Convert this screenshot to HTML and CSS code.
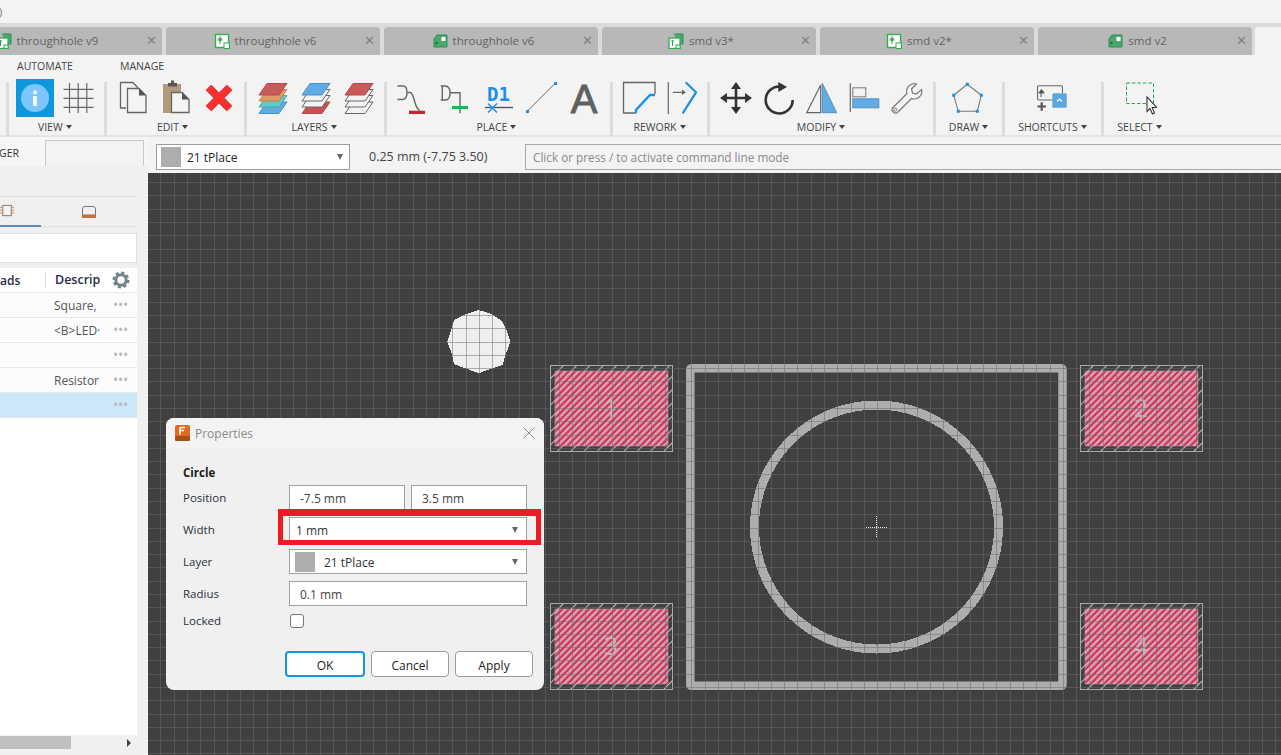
FILE: index.html
```html
<!DOCTYPE HTML>
<html lang="en-US">
<head>
	<meta charset="UTF-8">
	<title>Properties - Circle</title>
	<link rel="stylesheet" href="styles.css">
</head>
<body>
	<div id="titlebar">)</div>

	<div id="tabs">
		<div class="tab first">
			<svg class="tab-icon" viewBox="0 0 16 16"><use href="#ic-combo"/></svg>
			<span>throughhole v9</span><b class="tab-close">&#10005;</b>
		</div>
		<div class="tab">
			<svg class="tab-icon" viewBox="0 0 16 16"><use href="#ic-sch"/></svg>
			<span>throughhole v6</span><b class="tab-close">&#10005;</b>
		</div>
		<div class="tab">
			<svg class="tab-icon" viewBox="0 0 16 16"><use href="#ic-board"/></svg>
			<span>throughhole v6</span><b class="tab-close">&#10005;</b>
		</div>
		<div class="tab">
			<svg class="tab-icon" viewBox="0 0 16 16"><use href="#ic-combo"/></svg>
			<span>smd v3*</span><b class="tab-close">&#10005;</b>
		</div>
		<div class="tab">
			<svg class="tab-icon" viewBox="0 0 16 16"><use href="#ic-sch"/></svg>
			<span>smd v2*</span><b class="tab-close">&#10005;</b>
		</div>
		<div class="tab">
			<svg class="tab-icon" viewBox="0 0 16 16"><use href="#ic-board"/></svg>
			<span>smd v2</span><b class="tab-close">&#10005;</b>
		</div>
		<div class="tab active"></div>
	</div>

	<div id="ribbon">
		<div class="ribbon-nav">
			<span class="nav-automate">AUTOMATE</span>
			<span class="nav-manage">MANAGE</span>
		</div>
		<div class="ribbon-groups">
			<div class="group g-view">
				<div class="icons">
					<svg viewBox="0 0 36 38"><rect x="-1" width="38" height="38" fill="#0f97dc"/><circle cx="18" cy="19" r="14" fill="#7cc6ff"/><rect x="16.2" y="17" width="3.6" height="10" fill="#fff"/><rect x="16.2" y="11.5" width="3.6" height="3.6" fill="#fff"/></svg>
					<svg viewBox="0 0 36 38"><path d="M9.5 4V34M18.2 4V34M26.8 4V34M3.5 10.3H33.5M3.5 19.3H33.5M3.5 28.3H33.5" fill="none" stroke="#666" stroke-width="1.2"/></svg>
				</div>
				<div class="label">VIEW</div>
			</div>
			<div class="group g-edit">
				<div class="icons">
					<svg viewBox="0 0 36 38"><path d="M12 29H6.5V3.5H19L24 9" fill="none" stroke="#666" stroke-width="1.3"/><path d="M13.5 9.5H25L32 16.5V33.5H13.5Z" fill="#f4f4f4" stroke="#666" stroke-width="1.3"/><path d="M25 9.5V16.5H32Z" fill="#555"/></svg>
					<svg viewBox="0 0 36 38"><rect x="6" y="5" width="18" height="29" fill="#b09a78"/><rect x="11" y="4" width="9" height="3.5" fill="#555"/><rect x="14" y="1.5" width="3" height="3" fill="#555"/><path d="M14.5 13.5H25L32 20.5V33.5H14.5Z" fill="#f4f4f4" stroke="#666" stroke-width="1.3"/><path d="M25 13.5V20.5H32Z" fill="#555"/></svg>
					<svg viewBox="0 0 36 38"><path d="M8.5 8.5L29.5 29.5M29.5 8.5L8.5 29.5" fill="none" stroke="#d8343a" stroke-width="8"/><path d="M8.5 8.5L29.5 29.5M29.5 8.5L8.5 29.5" fill="none" stroke="#fa2f2f" stroke-width="6"/></svg>
				</div>
				<div class="label">EDIT</div>
			</div>
			<div class="group g-layers">
				<div class="icons">
					<svg viewBox="0 0 36 38"><polygon points="5,34.5 13,23 33,23 25,34.5" fill="#62ace3" stroke="#4c8fc4"/><polygon points="5,28 13,16.5 33,16.5 25,28" fill="#5ccbc9" stroke="#45aaa8"/><polygon points="5,22 13,10.5 33,10.5 25,22" fill="#e09a62" stroke="#c48350"/><polygon points="5,16 13,4.5 33,4.5 25,16" fill="#c85a5a" stroke="#b34a4a"/></svg>
					<svg viewBox="0 0 36 38"><polygon points="5,34.5 13,23 33,23 25,34.5" fill="#c85050" stroke="#b34a4a"/><polygon points="5,28 13,16.5 33,16.5 25,28" fill="#f4f4f4" stroke="#666"/><polygon points="5,22 13,10.5 33,10.5 25,22" fill="#f4f4f4" stroke="#666"/><polygon points="5,16 13,4.5 33,4.5 25,16" fill="#62ace3" stroke="#4c8fc4"/></svg>
					<svg viewBox="0 0 36 38"><polygon points="5,34.5 13,23 33,23 25,34.5" fill="#f4f4f4" stroke="#666"/><polygon points="5,28 13,16.5 33,16.5 25,28" fill="#f4f4f4" stroke="#666"/><polygon points="5,22 13,10.5 33,10.5 25,22" fill="#f4f4f4" stroke="#666"/><polygon points="5,16 13,4.5 33,4.5 25,16" fill="#c85a5a" stroke="#b34a4a"/></svg>
				</div>
				<div class="label">LAYERS</div>
			</div>
			<div class="group g-place">
				<div class="icons">
					<svg viewBox="0 0 36 38"><path d="M3.5 7H9Q13 7 13 13.5T9 20.5H3.5M13 13.5H16C21 14 19.5 29 26 31.7" fill="none" stroke="#666" stroke-width="1.4"/><rect x="15" y="31.7" width="16" height="3.3" fill="#c4282c"/></svg>
					<svg viewBox="0 0 36 38"><path d="M3.7 7H6.5M3.7 21H6.5M5.3 7V21M6.5 7H8Q13 7 13 14T8 21H6.5M13 13.7H23V27M23 30V34.3" fill="none" stroke="#666" stroke-width="1.4"/><rect x="15" y="27" width="16" height="3" fill="#1fb356"/></svg>
					<svg viewBox="0 0 36 38"><text class="icon-d1" x="7" y="22">D1</text><path d="M5 28.5H33" stroke="#555" stroke-width="1.4"/><path d="M8 24.5L17 33.5M17 24.5L8 33.5" stroke="#1a90e8" stroke-width="1.5"/></svg>
					<svg viewBox="0 0 36 38"><path d="M4.5 32L32 4.5" stroke="#666" stroke-width="1"/><rect x="3" y="31" width="3" height="3" fill="#1a90e8"/><rect x="31" y="3" width="3" height="3" fill="#1a90e8"/></svg>
					<svg viewBox="0 0 36 38"><text class="icon-a" x="18" y="34">A</text></svg>
				</div>
				<div class="label">PLACE</div>
			</div>
			<div class="group g-rework">
				<div class="icons">
					<svg viewBox="0 0 36 38"><path d="M35 15V3.5H3.5V34H16" fill="none" stroke="#666" stroke-width="1.3"/><path d="M16 34V31L30 16H35" fill="none" stroke="#1a90e8" stroke-width="2.4"/></svg>
					<svg viewBox="0 0 36 38"><path d="M5.3 3V35M10 13.3H20" fill="none" stroke="#666" stroke-width="1.2"/><path d="M19 10.5L23 13.3L19 16Z" fill="#666"/><path d="M22.7 3.3L33 13.3L19.7 34.3" fill="none" stroke="#1a90e8" stroke-width="2.2"/></svg>
				</div>
				<div class="label">REWORK</div>
			</div>
			<div class="group g-modify">
				<div class="icons">
					<svg viewBox="0 0 36 38"><path d="M19 8V30M8 19H30" stroke="#333" stroke-width="2.6"/><path d="M19 3L24 10H14ZM19 35L14 28H24ZM3 19L10 14V24ZM35 19L28 24V14Z" fill="#333"/></svg>
					<svg viewBox="0 0 36 38"><path d="M20 7.5A13.5 13.5 0 1 0 32.7 21" fill="none" stroke="#333" stroke-width="2.6"/><path d="M18.3 3L27 8L18.3 13Z" fill="#333"/></svg>
					<svg viewBox="0 0 36 38"><path d="M3.7 33.7L17.7 6V33.7Z" fill="none" stroke="#666" stroke-width="1.2"/><path d="M19.3 4.3L33.7 33.7H19.3Z" fill="#63ace3" stroke="#4f92c6"/></svg>
					<svg viewBox="0 0 36 38"><path d="M4.3 4.3V33" stroke="#666" stroke-width="1.2"/><rect x="6.8" y="8.8" width="13" height="9" fill="none" stroke="#777"/><rect x="6.8" y="19.8" width="26" height="9" fill="#63ace3" stroke="#4f92c6"/></svg>
					<svg viewBox="0 0 36 38"><path d="M3.5 29L18 14.5C16.5 9 21 3.5 27.5 5L22.5 10L23.5 14L27.5 15L32.5 10.5C34 16.5 28.5 21.5 22.5 19.5L8.5 33.5C6 35.5 1.5 31.5 3.5 29Z" fill="#f6f6f6" stroke="#777" stroke-width="1.2"/><circle cx="6.3" cy="30.6" r="1.5" fill="none" stroke="#777"/></svg>
				</div>
				<div class="label">MODIFY</div>
			</div>
			<div class="group g-draw">
				<div class="icons">
					<svg viewBox="0 0 36 38"><polygon points="16.3,5.3 30.3,16.3 26.3,32.3 7.3,32.3 2.7,16.3" fill="none" stroke="#777" stroke-width="1.1"/><path d="M14.8 3.8h3v3h-3zM28.8 14.8h3v3h-3zM24.8 30.8h3v3h-3zM5.8 30.8h3v3h-3zM1.2 14.8h3v3h-3z" fill="#1a90e8"/></svg>
				</div>
				<div class="label">DRAW</div>
			</div>
			<div class="group g-shortcuts">
				<div class="icons">
					<svg viewBox="0 0 36 38"><path d="M17 21H4A1.5 1.5 0 0 1 2.5 19.5V8.2A1.5 1.5 0 0 1 4 6.7H26A1.5 1.5 0 0 1 27.5 8.2V14" fill="none" stroke="#666" stroke-width="1.1"/><path d="M6 18V13.5M3.8 14L6.5 10.5L9.2 14Z" fill="#555" stroke="#555"/><path d="M2.5 27.5H11M6.7 23.2V31.7" stroke="#555" stroke-width="2.2"/><rect x="17.3" y="14.3" width="14.5" height="14.5" rx="1.5" fill="#5ba7df"/><path d="M22 22.5L24.5 20L27 22.5" fill="none" stroke="#fff" stroke-width="1.1"/></svg>
				</div>
				<div class="label">SHORTCUTS</div>
			</div>
			<div class="group g-select">
				<div class="icons">
					<svg viewBox="0 0 36 38"><rect x="3.5" y="4" width="27" height="20.5" fill="none" stroke="#1fa855" stroke-width="1" stroke-dasharray="3.5 2"/><path d="M24 18V32.5L27 29.5L29.5 35L31.5 34L29.2 28.6L33.5 28.3Z" fill="#fff" stroke="#333" stroke-width="1.1"/></svg>
				</div>
				<div class="label">SELECT</div>
			</div>
		</div>
	</div>

	<div id="lower">
		<aside id="sidebar">
			<div class="side-head">
				<span class="side-ger">GER</span>
				<span class="side-box"></span>
			</div>
			<div class="side-body">
				<div class="side-tabs">
					<div class="side-tab on">
						<svg width="16" height="14" viewBox="0 0 16 14"><rect x="3" y="1" width="9" height="11" fill="#f3f3f3" stroke="#777"/><path d="M0 3H3M0 6H3M0 9H3M12 3H15M12 6H15M12 9H15" stroke="#d9823a"/></svg>
					</div>
					<div class="side-tab">
						<svg width="16" height="14" viewBox="0 0 16 14"><path d="M1.5 10V4Q1.5 1.5 4 1.5H12Q14.5 1.5 14.5 4V10Z" fill="#f0f0f0" stroke="#777"/><rect x="1" y="10" width="14" height="3" fill="#c9703a"/></svg>
					</div>
				</div>
				<div class="side-search"></div>
				<div class="parts">
					<div class="parts-head">
						<span class="col-a">ads</span>
						<span class="col-b">Descrip</span>
						<svg class="gear" width="18" height="18" viewBox="0 0 18 18"><circle cx="9" cy="9" r="5.2" fill="none" stroke="#73848f" stroke-width="3"/><circle cx="9" cy="9" r="7.2" fill="none" stroke="#73848f" stroke-width="2.6" stroke-dasharray="3.05 2.6"/></svg>
					</div>
					<div class="part"><span class="col-a"></span><span class="col-b">Square,</span><span class="dots">&#8226;&#8226;&#8226;</span></div>
					<div class="part"><span class="col-a"></span><span class="col-b">&lt;B&gt;LED&middot;</span><span class="dots">&#8226;&#8226;&#8226;</span></div>
					<div class="part"><span class="col-a"></span><span class="col-b"></span><span class="dots">&#8226;&#8226;&#8226;</span></div>
					<div class="part"><span class="col-a"></span><span class="col-b">Resistor</span><span class="dots">&#8226;&#8226;&#8226;</span></div>
					<div class="part picked"><span class="col-a"></span><span class="col-b"></span><span class="dots">&#8226;&#8226;&#8226;</span></div>
					<div class="parts-rest"></div>
					<div class="hscroll">
						<span class="hscroll-thumb"></span>
						<span class="hscroll-arrow"></span>
					</div>
				</div>
			</div>
		</aside>

		<main id="work">
			<div class="options">
				<div class="layer-select">
					<span class="swatch"></span>
					<span class="layer-name">21 tPlace</span>
					<span class="caret"></span>
				</div>
				<span class="coords">0.25 mm (-7.75 3.50)</span>
				<div class="command">Click or press / to activate command line mode</div>
			</div>
			<div class="canvas">
				<svg class="board" viewBox="148 173 1133 582" width="1133" height="582">
					<defs>
						<pattern id="pad-fill" width="4.7" height="4.7" patternUnits="userSpaceOnUse" patternTransform="rotate(45 0 0)">
							<rect width="4.7" height="4.7" fill="#d42f58"/>
							<rect width="2.5" height="4.7" fill="#d2a8b4"/>
						</pattern>
						<pattern id="pad-hatch" width="9.4" height="9.4" patternUnits="userSpaceOnUse" patternTransform="rotate(45 0 0)">
							<rect width="1" height="9.4" fill="#c4c4c4"/>
						</pattern>
						<g id="pad">
							<rect x="0.5" y="0.5" width="122" height="86" fill="url(#pad-hatch)" stroke="#aaa"/>
							<rect x="5" y="6" width="113" height="75" fill="url(#pad-fill)" stroke="#c0a0aa" stroke-width="0.5"/>
						</g>
					</defs>
					<rect x="148" y="173" width="1133" height="582" fill="#404040"/>
					<polygon class="jagged" fill="#efefef" points="478.7,310 491.7,314 502.7,321.7 506.7,330.7 510.3,341.7 505,356.7 502.7,365 490,369 478.7,373.3 465.7,368.3 454,364.3 451.7,353.3 447.3,341.7 451.7,328.3 454,320 465.7,314.3"/>
					<use href="#pad" x="550" y="365"/>
					<use href="#pad" x="1080" y="365"/>
					<use href="#pad" x="550" y="603"/>
					<use href="#pad" x="1080" y="603"/>
					<rect x="690.3" y="368.3" width="372.2" height="317.5" rx="1" fill="none" stroke="#adadad" stroke-width="8.5"/>
					<circle class="jagged" cx="876.5" cy="527" r="122" fill="none" stroke="#adadad" stroke-width="9"/>
					<text class="pad-num" x="611" y="417">1</text>
					<text class="pad-num" x="1141" y="417">2</text>
					<text class="pad-num" x="611" y="655">3</text>
					<text class="pad-num" x="1141" y="655">4</text>
					<path d="M866 527H887M876.5 516V538" stroke="#e6e6e6" stroke-width="1" stroke-dasharray="1 1" shape-rendering="crispEdges"/>
					<!-- grid sits over the shapes, dashes keep the fractional pitch crisp -->
					<path d="M147.2 464H1281" stroke="#6a6a6a" stroke-opacity=".5" stroke-width="582" stroke-dasharray="1 12.27" shape-rendering="crispEdges"/>
					<path d="M714.5 168.9V755" stroke="#6a6a6a" stroke-opacity=".5" stroke-width="1133" stroke-dasharray="1 12.286" shape-rendering="crispEdges"/>
				</svg>
			</div>

			<div class="dialog">
				<div class="dialog-title">
					<svg width="15" height="16" viewBox="0 0 15 16"><rect width="15" height="16" rx="2" fill="#e8681e"/><rect y="11" width="15" height="5" rx="1.5" fill="#a8501c"/><path d="M5 2.5H10M5 2.5V9.5M5 5.5H9" stroke="#fff" stroke-width="1.6" fill="none"/></svg>
					<span>Properties</span>
					<svg class="dialog-close" width="12" height="12" viewBox="0 0 12 12"><path d="M.5.5L11.5 11.5M11.5.5L.5 11.5" stroke="#8f8f8f" stroke-width="1"/></svg>
				</div>
				<div class="dialog-body">
					<div class="section-name">Circle</div>
					<div class="field">
						<label>Position</label>
						<div class="pair">
							<div class="input">-7.5 mm</div>
							<div class="input">3.5 mm</div>
						</div>
					</div>
					<div class="field">
						<label>Width</label>
						<div class="input select tight">1 mm<span class="caret"></span></div>
					</div>
					<div class="field">
						<label>Layer</label>
						<div class="input select"><span class="swatch small"></span><span class="layer-value">21 tPlace</span><span class="caret"></span></div>
					</div>
					<div class="field">
						<label>Radius</label>
						<div class="input">0.1 mm</div>
					</div>
					<div class="field check-row">
						<label>Locked</label>
						<span class="checkbox"></span>
					</div>
				</div>
				<div class="dialog-buttons">
					<button class="btn primary">OK</button>
					<button class="btn">Cancel</button>
					<button class="btn">Apply</button>
				</div>
				<div class="callout"></div>
			</div>
		</main>
	</div>

	<svg class="sprites" width="0" height="0">
		<defs>
			<g id="ic-sch">
				<rect x="1.5" y="1.5" width="13" height="13" fill="#fff" stroke="#2db04a" stroke-width="1.4"/>
				<rect x="10" y="10" width="5.5" height="5.5" fill="#fff" stroke="#2db04a"/>
				<path d="M6 3V11M3.5 7H8.5M4.5 5.5H7.5L6 8Z" fill="none" stroke="#3a9a5a"/>
			</g>
			<g id="ic-board">
				<path d="M5 2H15V14H2V6Z" fill="#4aa86c" stroke="#2f8f52"/>
				<rect x="9.5" y="4" width="4" height="4" fill="#fff"/>
				<circle cx="4.5" cy="10" r="1.2" fill="#1f6f3e"/>
			</g>
			<g id="ic-combo">
				<path d="M6 1H15V11H11" fill="#4aa86c" stroke="#2f8f52"/>
				<rect x="1" y="5" width="11" height="10.5" fill="#fff" stroke="#2db04a" stroke-width="1.3"/>
				<rect x="8" y="12" width="4" height="3.5" fill="#fff" stroke="#2db04a"/>
				<path d="M4.5 7V13M3 8.5L4.5 7L6 8.5" fill="none" stroke="#3a9a5a"/>
			</g>
		</defs>
	</svg>
</body>
</html>
```

FILE: styles.css
```css
* {
	box-sizing: border-box;
}

html, body {
	margin: 0;
	padding: 0;
	height: 100%;
	overflow: hidden;
}

body {
	display: flex;
	flex-direction: column;
	background: #f3f3f3;
	font: 12px/1.25 "Open Sans", "Noto Sans", sans-serif;
	color: #333;
}

.sprites {
	position: absolute;
}

#titlebar {
	height: 23px;
	flex: none;
	padding-top: 3px;
	line-height: 18px;
	margin-left: -1px;
	color: #777;
	font-size: 11px;
}

/* document tabs */
#tabs {
	height: 32px;
	flex: none;
	display: flex;
	gap: 4px;
	padding-top: 4px;
	background: #dbdbdb;
	overflow: hidden;
}

.tab {
	flex: none;
	width: 214px;
	height: 28px;
	display: flex;
	align-items: center;
	justify-content: center;
	position: relative;
	padding-right: 16px;
	background: #b8b8b8;
	border-radius: 4px 4px 0 0;
	color: #636363;
	font-size: 11.5px;
}

.tab.first {
	margin-left: -52px;
}

.tab.active {
	background: #f4f4f4;
	margin-left: -1px;
}

.tab-icon {
	width: 16px;
	height: 16px;
	margin-right: 5px;
}

.tab-close {
	position: absolute;
	right: 5px;
	top: 6px;
	font: normal 13px/16px "DejaVu Sans", sans-serif;
	color: #808080;
}

/* ribbon */
#ribbon {
	height: 82px;
	flex: none;
	background: #f3f3f3;
	border-bottom: 2px solid #e4e4e4;
}

.ribbon-nav {
	height: 24px;
	position: relative;
	font-size: 10.5px;
	color: #444;
	line-height: 22px;
}

.nav-automate {
	position: absolute;
	left: 17px;
}

.nav-manage {
	position: absolute;
	left: 120px;
}

.ribbon-groups {
	display: flex;
	margin-left: 6px;
}

.group {
	height: 54px;
	border-left: 3px solid #dcdcdc;
	margin-top: 3px;
	position: relative;
}

.group .icons {
	display: flex;
	justify-content: center;
	gap: 7px;
	margin-top: -3px;
}

.group svg {
	flex: none;
	width: 36px;
	height: 38px;
	overflow: visible;
}

.label {
	text-align: center;
	font-size: 10.5px;
	line-height: 14px;
	margin-top: 3px;
	color: #444;
}

.label:after {
	content: "";
	display: inline-block;
	margin-left: 3px;
	vertical-align: 2px;
	border: 3.5px solid transparent;
	border-top: 4px solid #444;
	border-bottom: 0;
}

.g-view { width: 97.5px; }
.g-edit { width: 140px; }
.g-layers { width: 140px; }
.g-place { width: 226px; }
.g-rework { width: 97px; }
.g-modify { width: 226px; }
.g-draw { width: 69px; }
.g-shortcuts { width: 99px; }
.g-select { width: 78px; }

.g-view .label,
.g-place .label,
.g-select .label { padding-right: 3px; }
.g-edit .label { padding-right: 5px; }
.g-layers .label { padding-right: 2px; }

.icon-d1 {
	font: bold 19px "DejaVu Sans Mono", monospace;
	fill: #1a90e8;
}

.icon-a {
	font: 40px "Liberation Sans", sans-serif;
	fill: #606060;
	stroke: #606060;
	stroke-width: .9;
	text-anchor: middle;
}

/* lower part */
#lower {
	flex: 1;
	display: flex;
	min-height: 0;
}

#sidebar {
	width: 148px;
	flex: none;
	display: flex;
	flex-direction: column;
}

.side-head {
	height: 29px;
	flex: none;
	display: flex;
	padding-top: 3px;
	background: #f6f6f6;
}

.side-ger {
	width: 46px;
	font-size: 10.5px;
	line-height: 26px;
	margin-left: -1px;
}

.side-box {
	width: 99px;
	border: 1px solid #c8c8c8;
	border-bottom: 0;
	background: #f3f3f3;
}

.side-body {
	flex: 1;
	display: flex;
	flex-direction: column;
	background: #f0f0f0;
	padding: 30px 11px 5px 0;
}

.side-tabs {
	height: 31px;
	flex: none;
	display: flex;
	border-top: 1px solid #dfdfdf;
	border-bottom: 1px solid #dfdfdf;
}

.side-tab {
	width: 41px;
	display: flex;
	align-items: center;
	justify-content: flex-end;
	padding-right: 26px;
}

.side-tab.on {
	border-bottom: 2px solid #5b8ac0;
	margin-bottom: -1px;
}

.side-tab:not(.on) {
	width: 96px;
	padding-right: 40px;
}

.side-search {
	height: 30px;
	flex: none;
	margin-top: 6px;
	background: #fff;
	border: 1px solid #e2e2e2;
	border-left: 0;
}

.parts {
	flex: 1;
	display: flex;
	flex-direction: column;
	margin-top: 5px;
	min-height: 0;
}

.parts-head,
.part {
	display: flex;
	align-items: center;
	height: 25px;
	flex: none;
	border-bottom: 1px solid #e8e8e8;
	background: #fcfcfc;
}

.parts-head {
	background: #fff;
	font-weight: 600;
	color: #1f2d45;
}

.parts-head .col-b {
	border-left: 1px solid #e2e2e2;
	line-height: 16px;
	font-size: 12.5px;
}

.col-a {
	width: 45px;
	flex: none;
}

.col-b {
	width: 68px;
	flex: none;
	padding-left: 9px;
	overflow: hidden;
	white-space: nowrap;
	font-size: 12px;
}

.part .col-b {
	color: #555;
}

.dots {
	font-size: 14px;
	line-height: 14px;
	color: #b8b8b8;
	letter-spacing: -.3px;
}

.part.picked {
	background: #cce8f9;
}

.gear {
	margin-left: -1px;
}

.parts-rest {
	flex: 1;
	background: #fff;
}

.hscroll {
	height: 15px;
	flex: none;
	display: flex;
	align-items: center;
	justify-content: space-between;
	background: #f0f0f0;
	margin-right: -11px;
	padding-right: 17px;
}

.hscroll-thumb {
	width: 71px;
	height: 13px;
	background: #bfbfbf;
}

.hscroll-arrow {
	border: 4px solid transparent;
	border-left: 4px solid #444;
	border-right: 0;
}

/* work area */
#work {
	flex: 1;
	display: flex;
	flex-direction: column;
	position: relative;
	min-width: 0;
}

.options {
	height: 36px;
	flex: none;
	display: flex;
	align-items: flex-start;
	padding: 7px 0 0 8px;
	background: #f3f3f3;
}

.layer-select {
	width: 194px;
	height: 26px;
	display: flex;
	align-items: center;
	padding: 0 6px 0 4px;
	background: #fff;
	border: 1px solid #9c9c9c;
}

.swatch {
	width: 20px;
	height: 20px;
	flex: none;
	background: #adadad;
}

.layer-name {
	flex: 1;
	margin-left: 6px;
	color: #222;
}

.caret {
	border: 3.5px solid transparent;
	border-top: 6px solid #666;
	border-bottom: 0;
}

.coords {
	width: 156px;
	margin-left: 19px;
	line-height: 26px;
	font-size: 12.5px;
	color: #444;
}

.command {
	flex: 1;
	height: 26px;
	padding-left: 7px;
	line-height: 24px;
	font-size: 11.75px;
	color: #8a8a8a;
	background: #f3f3f3;
	border: 1px solid #a8a8a8;
	border-right: 0;
}

.canvas {
	flex: 1;
	min-height: 0;
	background: #404040;
}

.board {
	display: block;
}

.jagged {
	shape-rendering: crispEdges;
}

.pad-num {
	font: 25px "Open Sans", sans-serif;
	fill: #c4b4b8;
	text-anchor: middle;
}

/* properties dialog */
.dialog {
	position: absolute;
	left: 18px;
	top: 281px;
	width: 378px;
	height: 272px;
	background: #f0f0f0;
	border-radius: 8px;
}

.dialog-title {
	height: 30px;
	display: flex;
	align-items: center;
	padding: 0 9px;
	background: #f3f3f3;
	border-radius: 8px 8px 0 0;
	color: #8a8a8a;
}

.dialog-title span {
	margin-left: 5px;
}

.dialog-close {
	margin-left: auto;
}

.dialog-body {
	padding: 15px 17px 0;
	color: #2a2f3d;
}

.section-name {
	font-weight: 700;
	font-size: 11.5px;
	height: 22px;
	line-height: 20px;
	color: #1a1a1a;
}

.field {
	display: flex;
	align-items: center;
	height: 25px;
	margin-bottom: 7px;
}

.field label {
	width: 106px;
	flex: none;
	font-size: 11.5px;
	padding-top: 2px;
}

.pair {
	flex: 1;
	display: flex;
	gap: 6px;
}

.input {
	flex: 1;
	height: 25px;
	padding: 1px 0 0 10px;
	display: flex;
	align-items: center;
	background: #fff;
	border: 1px solid #a0a0a0;
	color: #444;
}

.input.select {
	padding: 1px 8px 0 5px;
}

.input.tight {
	padding-left: 6px;
	color: #333;
}

.input .caret {
	margin-left: auto;
}

.swatch.small {
	width: 20px;
	height: 20px;
	margin-top: -1px;
}

.layer-value {
	margin-left: 9px;
	color: #333;
}

.check-row {
	height: 15px;
	margin-bottom: 0;
	margin-top: 1px;
}

.checkbox {
	width: 14px;
	height: 14px;
	margin-left: 1px;
	background: #fff;
	border: 1px solid #777;
	border-radius: 3px;
}

.dialog-buttons {
	display: flex;
	gap: 6px;
	padding-left: 119px;
	margin-top: 23px;
}

.btn {
	width: 78px;
	height: 26px;
	padding: 2px 0 0;
	font: inherit;
	color: #222;
	background: #fff;
	border: 1px solid #9a9a9a;
	border-radius: 4px;
}

.btn.primary {
	width: 80px;
	border: 2px solid #0f97dc;
}

.callout {
	position: absolute;
	left: 112px;
	top: 91px;
	width: 263px;
	height: 36px;
	border: 5px solid #ed1c24;
	border-top-width: 7px;
}
```
